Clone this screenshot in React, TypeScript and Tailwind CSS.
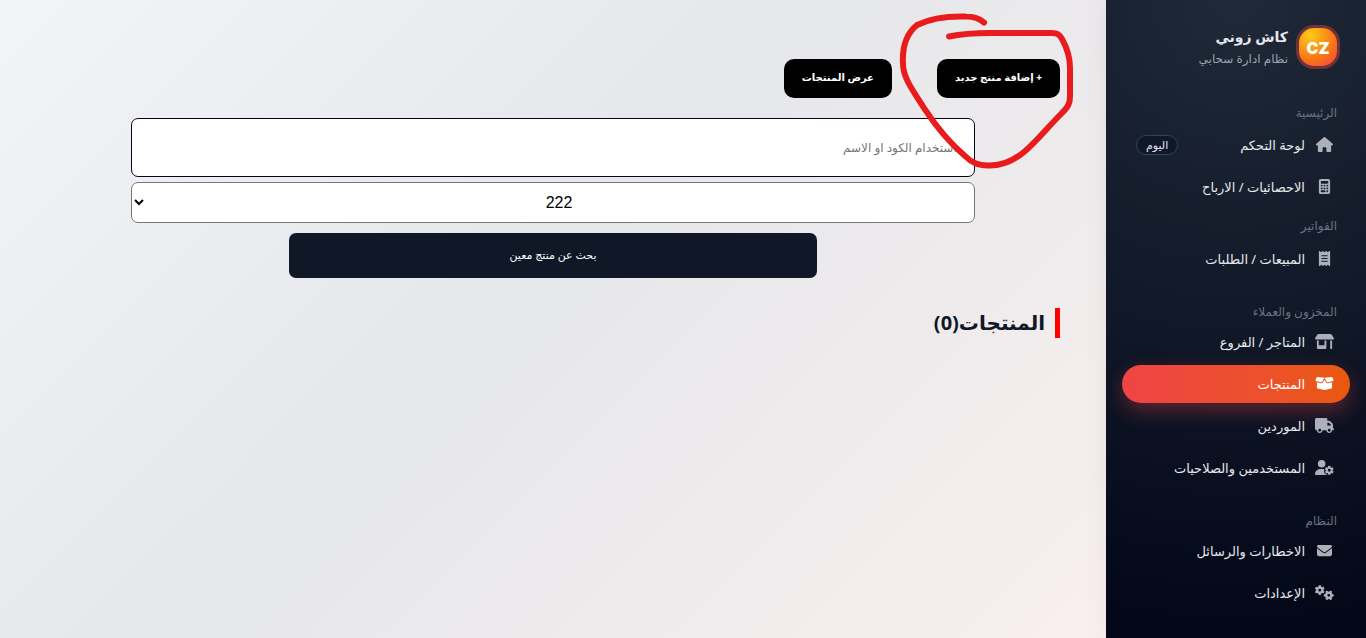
import React from 'react';
import {
  FaBoxOpen,
  FaCalculator,
  FaEnvelope,
  FaGears,
  FaHouse,
  FaReceipt,
  FaShop,
  FaTruck,
  FaUserGear,
} from 'react-icons/fa6';
import type { IconType } from 'react-icons';

type NavItem = { label: string; icon: IconType; size?: number; badge?: string; active?: boolean };
type NavSection = { title: string; items: NavItem[]; className?: string };

const sections: NavSection[] = [
  {
    title: 'الرئيسية',
    items: [
      { label: 'لوحة التحكم', icon: FaHouse, size: 17, badge: 'اليوم' },
      { label: 'الاحصائيات / الارباح', icon: FaCalculator },
    ],
    className: 'mb-[10px] gap-[3px]',
  },
  {
    title: 'الفواتير',
    items: [{ label: 'المبيعات / الطلبات', icon: FaReceipt }],
    className: 'mb-6 gap-1',
  },
  {
    title: 'المخزون والعملاء',
    items: [
      { label: 'المتاجر / الفروع', icon: FaShop, size: 19 },
      { label: 'المنتجات', icon: FaBoxOpen, size: 19, active: true },
      { label: 'الموردين', icon: FaTruck, size: 19 },
      { label: 'المستخدمين والصلاحيات', icon: FaUserGear, size: 19 },
    ],
    className: 'mb-6 gap-px',
  },
  {
    title: 'النظام',
    items: [
      { label: 'الاخطارات والرسائل', icon: FaEnvelope },
      { label: 'الإعدادات', icon: FaGears, size: 19 },
    ],
    className: 'gap-px',
  },
];

function NavLink({ label, icon: Icon, size = 15, badge, active }: NavItem) {
  return (
    <a
      href="#"
      className={`flex h-[38px] items-center gap-[10px] rounded-full pr-4 pl-[14px] text-[13px] ${
        active
          ? 'bg-linear-to-l from-[#ea580c] to-[#ef4444] text-white shadow-[0_8px_20px_rgba(239,68,68,0.35)]'
          : 'text-gray-200'
      }`}
    >
      <span className={`flex w-[19px] justify-center pb-px ${active ? 'text-white' : 'text-[#adb0b8]'}`}>
        <Icon size={size} className="shrink-0" />
      </span>
      <span className="pt-[2px]">{label}</span>
      {badge && (
        <span className="mr-auto rounded-full border border-slate-700 bg-[#0f172a] px-[9px] text-[11px] leading-[18px]">
          {badge}
        </span>
      )}
    </a>
  );
}

function Sidebar() {
  return (
    <aside className="z-10 w-[260px] shrink-0 bg-[radial-gradient(circle_at_top,#1f2937_0%,#111827_50%,#020617_100%)] px-4 pt-[25px] shadow-[0_0_25px_rgba(15,23,42,0.06)]">
      <div className="mb-[34px] flex items-center gap-2 pr-[10px]">
        <div className="flex size-11 items-center justify-center rounded-[18px] border-3 border-[#73313a] bg-[radial-gradient(circle_at_30%_20%,#facc15,#f97316_60%,#ef4444)] pt-px font-['Inter',sans-serif] text-base font-black text-white">
          CZ
        </div>
        <div>
          <div className="text-sm leading-6 font-bold text-gray-200">كاش زوني</div>
          <div className="text-xs leading-5 text-gray-400">نظام ادارة سحابي</div>
        </div>
      </div>
      <nav>
        {sections.map((section) => (
          <div key={section.title} className={`flex flex-col ${section.className}`}>
            <h2 className="pr-[13px] text-xs leading-5 text-gray-500">{section.title}</h2>
            <div className="flex flex-col gap-1">
              {section.items.map((item) => (
                <NavLink key={item.label} {...item} />
              ))}
            </div>
          </div>
        ))}
      </nav>
    </aside>
  );
}

function Annotation() {
  return (
    <svg
      className="pointer-events-none absolute top-0 right-[6px] z-20"
      width="220"
      height="190"
      viewBox="880 0 220 190"
      fill="none"
      stroke="#e81c1c"
      strokeWidth="6"
      strokeLinecap="round"
      strokeLinejoin="round"
    >
      <path d="M984 22.500C979 18 974 16.500 966 16.500C948 16 931 18 917 25C906 34 902 47 903 64C903 78 914 92 924 108C937 128 951 144 965 156C972 163 978 165 988 165.500C1000 166 1012 162 1024 152C1036 142 1047 128 1061 114C1069 106 1070 103 1070 96V68C1070 54 1066 46 1062 39C1059 34 1057 33 1052 33H990C973 33 961 34 949 36.500" />
    </svg>
  );
}

function Products() {
  return (
    <main className="relative flex-1 bg-linear-[135deg,#f3f4f6,#e5e7eb_45%,#f9efee] p-[25px]">
      <div className="mt-[34px] flex gap-[45px] px-[21px]">
        <button className="h-[39px] rounded-[10px] bg-black px-[18px] pb-[2px] text-[10px] font-bold text-white">
          + إضافة منتج جديد
        </button>
        <button className="h-[39px] rounded-[10px] bg-black px-[18px] pb-[2px] text-[10px] font-bold text-white">
          عرض المنتجات
        </button>
      </div>
      <form className="mt-5 flex flex-col items-center">
        <input
          type="text"
          aria-label="باستخدام الكود او الاسم"
          placeholder="باستخدام الكود او الاسم"
          className="h-[59px] w-4/5 rounded-[7px] border border-slate-950 bg-white px-[14px] text-xs placeholder:text-[#757575]"
        />
        <select
          aria-label="222"
          className="mt-[5px] h-[41px] w-4/5 rounded-[7px] border border-[#767676] bg-white text-center font-['Liberation_Sans',sans-serif] text-base text-black"
        >
          <option>222</option>
        </select>
        <button
          type="button"
          className="mt-[10px] h-[45px] w-1/2 rounded-[7px] bg-gray-900 text-[11px] text-white"
        >
          بحث عن منتج معين
        </button>
      </form>
      <h1 className="mx-[21px] mt-[30px] border-r-5 border-[#ff0000] pr-[10px] text-xl leading-[30px] font-bold text-gray-900">
        المنتجات(0)
      </h1>
      <Annotation />
    </main>
  );
}

export default function App() {
  return (
    <div dir="rtl" className="flex min-h-screen font-['Noto_Sans','DejaVu_Sans',sans-serif]">
      <Sidebar />
      <Products />
    </div>
  );
}
